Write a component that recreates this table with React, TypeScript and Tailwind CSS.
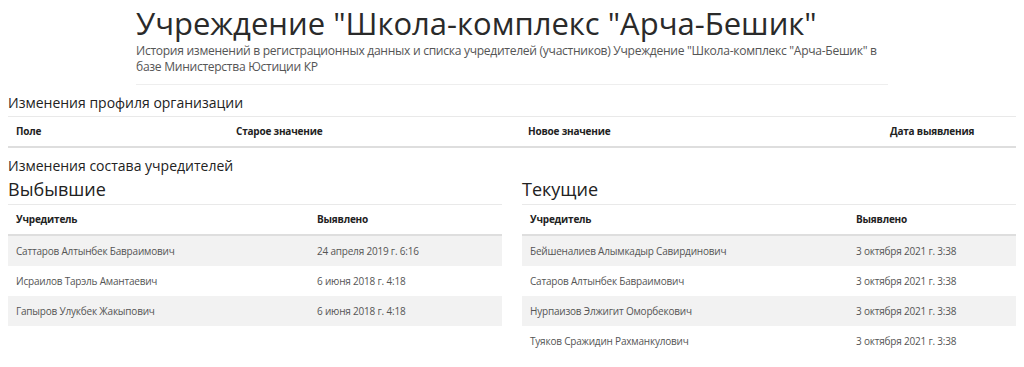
const FONT = { fontFamily: '"Open Sans", "Noto Sans", sans-serif' };

type Founder = { name: string; date: string };

const LEFT: Founder[] = [
  { name: "Саттаров Алтынбек Бавраимович", date: "24 апреля 2019 г. 6:16" },
  { name: "Исраилов Тарэль Амантаевич", date: "6 июня 2018 г. 4:18" },
  { name: "Гапыров Улукбек Жакыпович", date: "6 июня 2018 г. 4:18" },
];

const RIGHT: Founder[] = [
  { name: "Бейшеналиев Алымкадыр Савирдинович", date: "3 октября 2021 г. 3:38" },
  { name: "Сатаров Алтынбек Бавраимович", date: "3 октября 2021 г. 3:38" },
  { name: "Нурпаизов Элжигит Оморбекович", date: "3 октября 2021 г. 3:38" },
  { name: "Туяков Сражидин Рахманкулович", date: "3 октября 2021 г. 3:38" },
];

const TH = "text-left font-bold text-[#222] px-2 pt-[7px] pb-[7px] leading-[15px]";
const TD = "px-2 py-[7.5px] leading-[15px] text-[#555]";

function FounderTable({ title, rows, nameCol }: { title: string; rows: Founder[]; nameCol: string }) {
  return (
    <div className="flex flex-col">
      <h3 className="text-[18px] leading-[26px] text-[#222] mb-[2px]">{title}</h3>
      <table className="w-full table-fixed border-collapse text-[10px] tracking-[-0.2px]">
        <colgroup>
          <col className={nameCol} />
          <col />
        </colgroup>
        <thead>
          <tr className="border-t border-[#e9e9e9] border-b-2 border-b-[#dedede]">
            <th className={TH}>Учредитель</th>
            <th className={TH}>Выявлено</th>
          </tr>
        </thead>
        <tbody>
          {rows.map((r, i) => (
            <tr key={r.name} className={i % 2 === 0 ? "bg-[#f2f2f2]" : "bg-white"}>
              <td className={TD}>{r.name}</td>
              <td className={TD}>{r.date}</td>
            </tr>
          ))}
        </tbody>
      </table>
    </div>
  );
}

export default function App() {
  return (
    <div className="w-[1024px] h-[367px] overflow-hidden bg-white" style={FONT}>
      <header className="mx-auto w-[752px] pt-[3px] pb-[9px] border-b border-[#eeeeee]">
        <h1 className="text-[31px] leading-[40px] text-[#2a2a2a]">Учреждение "Школа-комплекс "Арча-Бешик"</h1>
        <p className="text-[12.1px] tracking-[-0.3px] leading-[16px] text-[#555]">
          История изменений в регистрационных данных и списка учредителей (участников) Учреждение "Школа-комплекс "Арча-Бешик" в базе Министерства Юстиции КР
        </p>
      </header>

      <main className="px-2 pt-[8px]">
        <h2 className="text-[14px] leading-[20px] text-[#222] mb-[3px]">Изменения профиля организации</h2>
        <table className="w-full table-fixed border-collapse text-[10px] tracking-[-0.2px]">
          <colgroup>
            <col className="w-[220px]" />
            <col className="w-[292px]" />
            <col className="w-[362px]" />
            <col />
          </colgroup>
          <thead>
            <tr className="border-t border-[#e9e9e9] border-b-2 border-b-[#dedede]">
              <th className={TH}>Поле</th>
              <th className={TH}>Старое значение</th>
              <th className={TH}>Новое значение</th>
              <th className={TH}>Дата выявления</th>
            </tr>
          </thead>
        </table>

        <h2 className="mt-[8px] text-[14px] leading-[20px] text-[#222]">Изменения состава учредителей</h2>
        <div className="grid grid-cols-2 gap-5">
          <FounderTable title="Выбывшие" rows={LEFT} nameCol="w-[301px]" />
          <FounderTable title="Текущие" rows={RIGHT} nameCol="w-[326px]" />
        </div>
      </main>
    </div>
  );
}
